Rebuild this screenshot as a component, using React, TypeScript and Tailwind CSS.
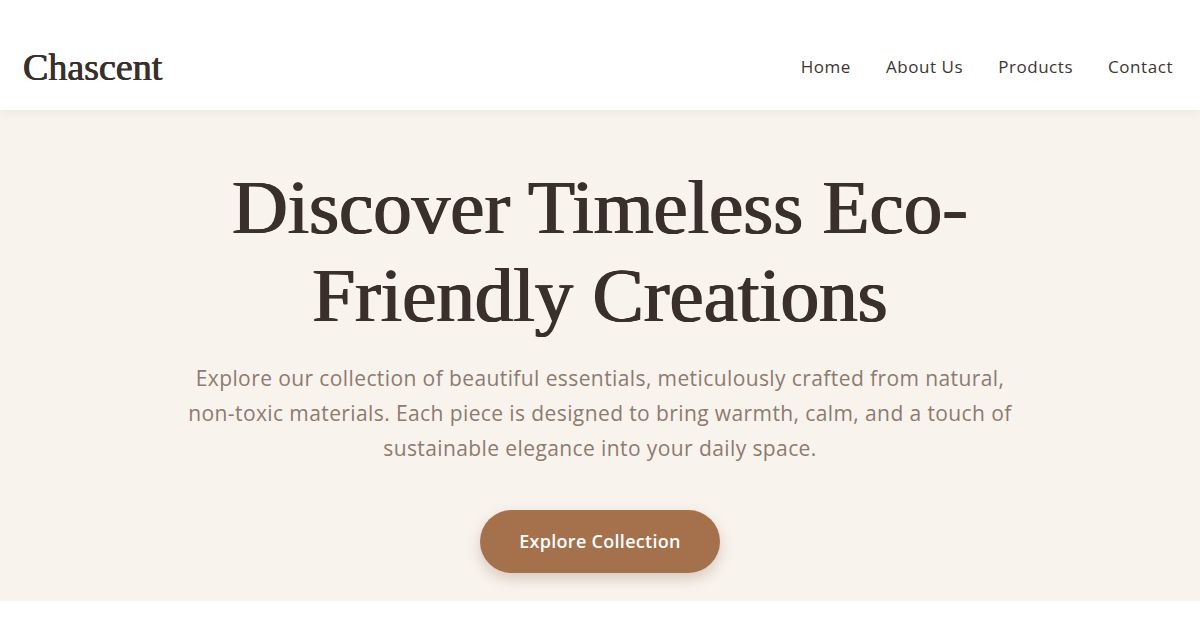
import React from "react";

export default function App() {
  return (
    <div className="w-full min-h-[630px] bg-white">
      <header className="h-[110px] bg-white flex items-center justify-between pl-[23px] pr-[27px] pt-[24px] relative z-10 shadow-[0_2px_10px_rgba(0,0,0,0.05)]">
        <div className="text-[38px] leading-none text-[#3a302b] font-['Liberation_Serif',serif] [text-shadow:0.4px_0_0_#3a302b,-0.4px_0_0_#3a302b]">Chascent</div>
        <nav className="flex items-center gap-[35px] text-[17px] tracking-[0.55px] text-[#3d3632] font-['Open_Sans',sans-serif]">
          <a>Home</a>
          <a>About Us</a>
          <a>Products</a>
          <a>Contact</a>
        </nav>
      </header>
      <section className="bg-[#f9f3ee] h-[491px] flex flex-col items-center pt-[53px]">
        <h1 className="text-[77px] leading-[88px] text-[#3a302b] font-['Liberation_Serif',serif] text-center [text-shadow:0.8px_0_0_#3a302b,-0.8px_0_0_#3a302b]">
          Discover Timeless Eco-
          <br />
          Friendly Creations
        </h1>
        <p className="mt-[22px] text-[21px] leading-[35px] tracking-[0.4px] text-[#8c7b70] font-['Open_Sans',sans-serif] text-center max-w-[860px]">
          Explore our collection of beautiful essentials, meticulously crafted from natural, non-toxic materials. Each piece is designed to bring warmth, calm, and a touch of sustainable elegance into your daily space.
        </p>
        <button className="mt-[44px] w-[240px] h-[63px] rounded-full bg-[#a5714d] text-white text-[18px] tracking-[0.3px] font-semibold font-['Open_Sans',sans-serif] shadow-[0_6px_14px_rgba(120,80,50,0.25)]">
          Explore Collection
        </button>
      </section>
    </div>
  );
}
